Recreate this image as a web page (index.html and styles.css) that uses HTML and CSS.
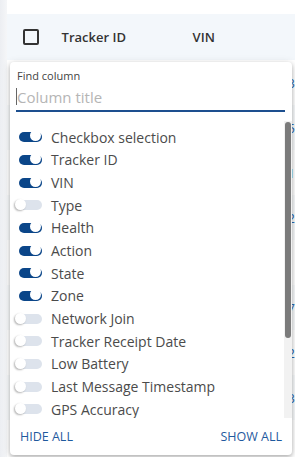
FILE: index.html
```html
<!DOCTYPE html>
<html lang="en">
<head>
  <meta charset="UTF-8">
  <title>Trackers</title>
  <link rel="stylesheet" href="styles.css">
</head>
<body>
  <div class="page">
    <div class="side"></div>
    <div class="content">
      <div class="topbar"></div>
      <div class="grid">
        <div class="grid-head">
          <span class="check"></span>
          <span class="col col-id">Tracker ID</span>
          <span class="col col-vin">VIN</span>
        </div>
        <div class="grid-row"><span class="cell">3</span></div>
        <div class="grid-row"><span class="cell">5</span></div>
        <div class="grid-row"><span class="cell">1</span></div>
        <div class="grid-row"><span class="cell">2</span></div>
        <div class="grid-row"><span class="cell">:</span></div>
        <div class="grid-row"><span class="cell">7</span></div>
        <div class="grid-row"><span class="cell">2</span></div>
        <div class="grid-row"><span class="cell">3</span></div>
      </div>
    </div>

    <div class="panel">
      <div class="find">
        <label for="find-col">Find column</label>
        <div class="find-input">
          <span class="caret"></span>
          <input id="find-col" type="text" placeholder="Column title">
        </div>
      </div>

      <div class="list-wrap">
        <ul class="col-list">
          <li><span class="switch on"></span>Checkbox selection</li>
          <li><span class="switch on"></span>Tracker ID</li>
          <li><span class="switch on"></span>VIN</li>
          <li><span class="switch"></span>Type</li>
          <li><span class="switch on"></span>Health</li>
          <li><span class="switch on"></span>Action</li>
          <li><span class="switch on"></span>State</li>
          <li><span class="switch on"></span>Zone</li>
          <li><span class="switch"></span>Network Join</li>
          <li><span class="switch"></span>Tracker Receipt Date</li>
          <li><span class="switch"></span>Low Battery</li>
          <li><span class="switch"></span>Last Message Timestamp</li>
          <li><span class="switch"></span>GPS Accuracy</li>
        </ul>
        <div class="scrollbar"><div class="scroll-thumb"></div></div>
      </div>

      <div class="panel-foot">
        <button>Hide all</button>
        <button>Show all</button>
      </div>
    </div>
  </div>
</body>
</html>
```

FILE: styles.css
```css
body {
  margin: 0;
  font-family: "Open Sans", "DejaVu Sans", sans-serif;
  background-color: #fff;
  color: #333;
  overflow: hidden;
}

.page {
  position: relative;
  display: flex;
  height: 457px;
}

.side {
  width: 10px;
  background: linear-gradient(to right, #eceef2, #f5f6f8);
}

.content {
  flex: 1;
}

.topbar {
  height: 14px;
}

.grid-head {
  height: 46px;
  display: flex;
  align-items: center;
  background-color: #f3f7fb;
  font-size: 13px;
  font-weight: 600;
  color: #333;
}

.check {
  width: 12px;
  height: 12px;
  border: 2px solid #333;
  border-radius: 2px;
  margin-left: 16px;
}

.col-id {
  margin-left: 23px;
  width: 131px;
}

.grid-row {
  height: 45px;
  display: flex;
  align-items: center;
  padding-left: 281px;
  font-size: 13px;
  color: #2a6ab0;
}

.grid-row:nth-child(odd) {
  background-color: #f8fafc;
}

/* columns panel */
.panel {
  position: absolute;
  left: 10px;
  top: 62px;
  width: 282px;
  height: 393px;
  background-color: #fff;
  border-radius: 4px;
  box-shadow: 0 2px 4px rgba(0, 0, 0, 0.25), 0 1px 8px rgba(0, 0, 0, 0.12);
  display: flex;
  flex-direction: column;
}

.find {
  padding: 6px 7px 0 6px;
}

.find label {
  display: block;
  font-size: 11px;
  color: #444;
  line-height: 15px;
  padding-left: 1px;
}

.find-input {
  display: flex;
  align-items: center;
  height: 27px;
  border-bottom: 2px solid #1d4f8f;
}

.caret {
  width: 1px;
  height: 17px;
  background-color: #666;
}

.find-input input {
  flex: 1;
  border: none;
  outline: none;
  padding: 0;
  font-family: inherit;
  font-size: 15px;
  color: #333;
}

.find-input input::placeholder {
  color: #b5b5b5;
}

.list-wrap {
  flex: 1;
  display: flex;
  margin-top: 9px;
  min-height: 0;
}

.col-list {
  list-style-type: none;
  margin: 0;
  padding: 5px 0 0;
  flex: 1;
  overflow: hidden;
}

.scrollbar {
  width: 8px;
  padding: 1px 1px 0;
  box-sizing: border-box;
  background-color: #f2f2f2;
}

.scroll-thumb {
  height: 216px;
  border-radius: 3px;
  background-color: #7b7b7b;
}

.col-list li {
  height: 22.67px;
  display: flex;
  align-items: center;
  font-size: 14px;
  color: #4b4b4b;
  white-space: nowrap;
}

.switch {
  position: relative;
  width: 23px;
  height: 10px;
  margin: 0 9px 0 9px;
  border-radius: 5px;
  background-color: #dde3ec;
}

.switch::after {
  content: "";
  position: absolute;
  left: -4px;
  top: -1px;
  width: 11px;
  height: 11px;
  border-radius: 50%;
  background-color: #fff;
  box-shadow: -1px 1px 2px rgba(0, 0, 0, 0.3);
}

.switch.on {
  background-color: #0b4689;
}

.switch.on::after {
  left: 11px;
  top: -2px;
  box-shadow: none;
}

.panel-foot {
  height: 37px;
  display: flex;
  justify-content: space-between;
  align-items: center;
  padding: 0 10px 0 10px;
}

.panel-foot button {
  font-family: inherit;
  font-size: 12.5px;
  font-weight: 500;
  text-transform: uppercase;
  color: #1f5a9e;
  background: none;
  border: none;
  padding: 0;
  cursor: pointer;
}
```
